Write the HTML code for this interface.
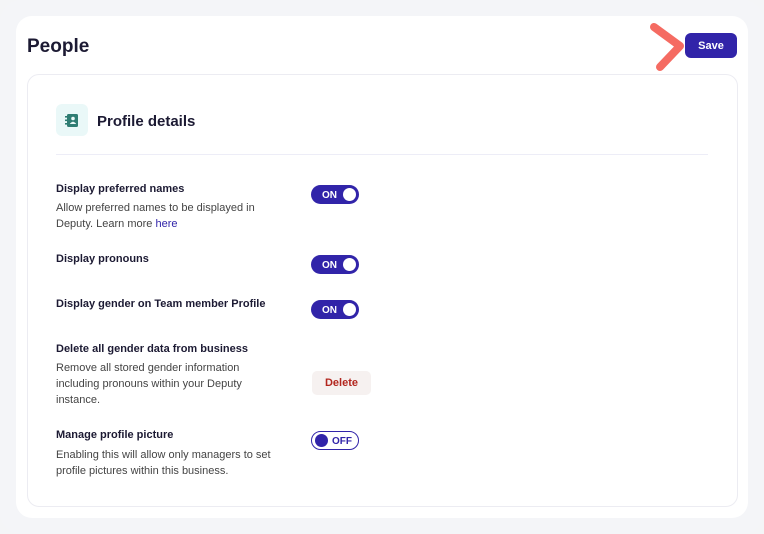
<!DOCTYPE html>
<html><head><style>
body{margin:0;width:764px;height:534px;background:#f4f5f7;font-family:"Liberation Sans",sans-serif;position:relative;overflow:hidden;color:#1c1a33}
.outer{position:absolute;left:0;top:0;width:764px;height:534px;background:#f4f5f8;border-radius:22px}
.card{position:absolute;left:16px;top:16px;width:732px;height:502px;background:#fff;border-radius:16px}
h1{position:absolute;left:27px;top:36px;margin:0;font-size:19px;font-weight:bold;color:#1c1a33}
.save{position:absolute;left:685px;top:33px;width:52px;height:25px;background:#3124a9;border-radius:6px;color:#fff;font-size:11px;font-weight:bold;text-align:center;line-height:26px}
.inner{position:absolute;left:27px;top:74px;width:709px;height:431px;border:1px solid #ececf2;border-radius:12px}
.icon{position:absolute;left:56px;top:104px;width:32px;height:32px;background:#eaf8f8;border-radius:6px}
.pd{position:absolute;left:97px;top:113px;font-size:15px;font-weight:bold;color:#1c1a33}
.hr{position:absolute;left:56px;top:154px;width:652px;height:1px;background:#ededf7}
.t{position:absolute;left:56px;font-size:11px;font-weight:bold;color:#1c1a33}
.d{position:absolute;left:56px;font-size:11px;color:#444;line-height:16px}
.d a{color:#3124a9;text-decoration:none}
.tg{position:absolute;left:311px;width:48px;height:19px;border-radius:10px;background:#3124a9;box-sizing:border-box}
.tg span{position:absolute;left:11px;top:5px;font-size:10px;font-weight:bold;color:#fff}
.tg i{position:absolute;right:3px;top:3px;width:13px;height:13px;border-radius:50%;background:#fff}
.off{background:#fff;border:1px solid #3124a9}
.off span{left:20px;top:4px;color:#3124a9}
.off i{left:3px;top:2px;background:#3124a9}
.del{position:absolute;left:312px;top:371px;width:59px;height:24px;background:#f6f1f0;border-radius:5px;color:#b3261e;font-size:11px;font-weight:bold;text-align:center;line-height:25px}
</style></head><body>
<div class="outer"></div>
<div class="card"></div>
<h1>People</h1>
<svg style="position:absolute;left:645px;top:20px" width="45" height="55"><path d="M9 7 L35 26 L15 47" fill="none" stroke="#f56b62" stroke-width="8" stroke-linecap="round" stroke-linejoin="round"/></svg>
<div class="save">Save</div>
<div class="inner"></div>
<div class="icon"><svg width="32" height="32"><rect x="11" y="10" width="11" height="13" rx="1.5" fill="#2f7d73"/><rect x="9" y="12" width="4" height="1.6" fill="#2f7d73"/><rect x="9" y="15.5" width="4" height="1.6" fill="#2f7d73"/><rect x="9" y="19" width="4" height="1.6" fill="#2f7d73"/><circle cx="17" cy="14.5" r="1.8" fill="#eaf8f8"/><path d="M13.8 20 Q17 15.5 20.2 20Z" fill="#eaf8f8"/></svg></div>
<div class="pd">Profile details</div>
<div class="hr"></div>
<div class="t" style="top:183px">Display preferred names</div>
<div class="d" style="top:200px">Allow preferred names to be displayed in<br>Deputy. Learn more <a>here</a></div>
<div class="tg" style="top:185px"><span>ON</span><i></i></div>
<div class="t" style="top:253px">Display pronouns</div>
<div class="tg" style="top:255px"><span>ON</span><i></i></div>
<div class="t" style="top:298px">Display gender on Team member Profile</div>
<div class="tg" style="top:300px"><span>ON</span><i></i></div>
<div class="t" style="top:343px">Delete all gender data from business</div>
<div class="d" style="top:360px">Remove all stored gender information<br>including pronouns within your Deputy<br>instance.</div>
<div class="del">Delete</div>
<div class="t" style="top:429px">Manage profile picture</div>
<div class="d" style="top:447px">Enabling this will allow only managers to set<br>profile pictures within this business.</div>
<div class="tg off" style="top:431px"><span>OFF</span><i></i></div>
</body></html>
